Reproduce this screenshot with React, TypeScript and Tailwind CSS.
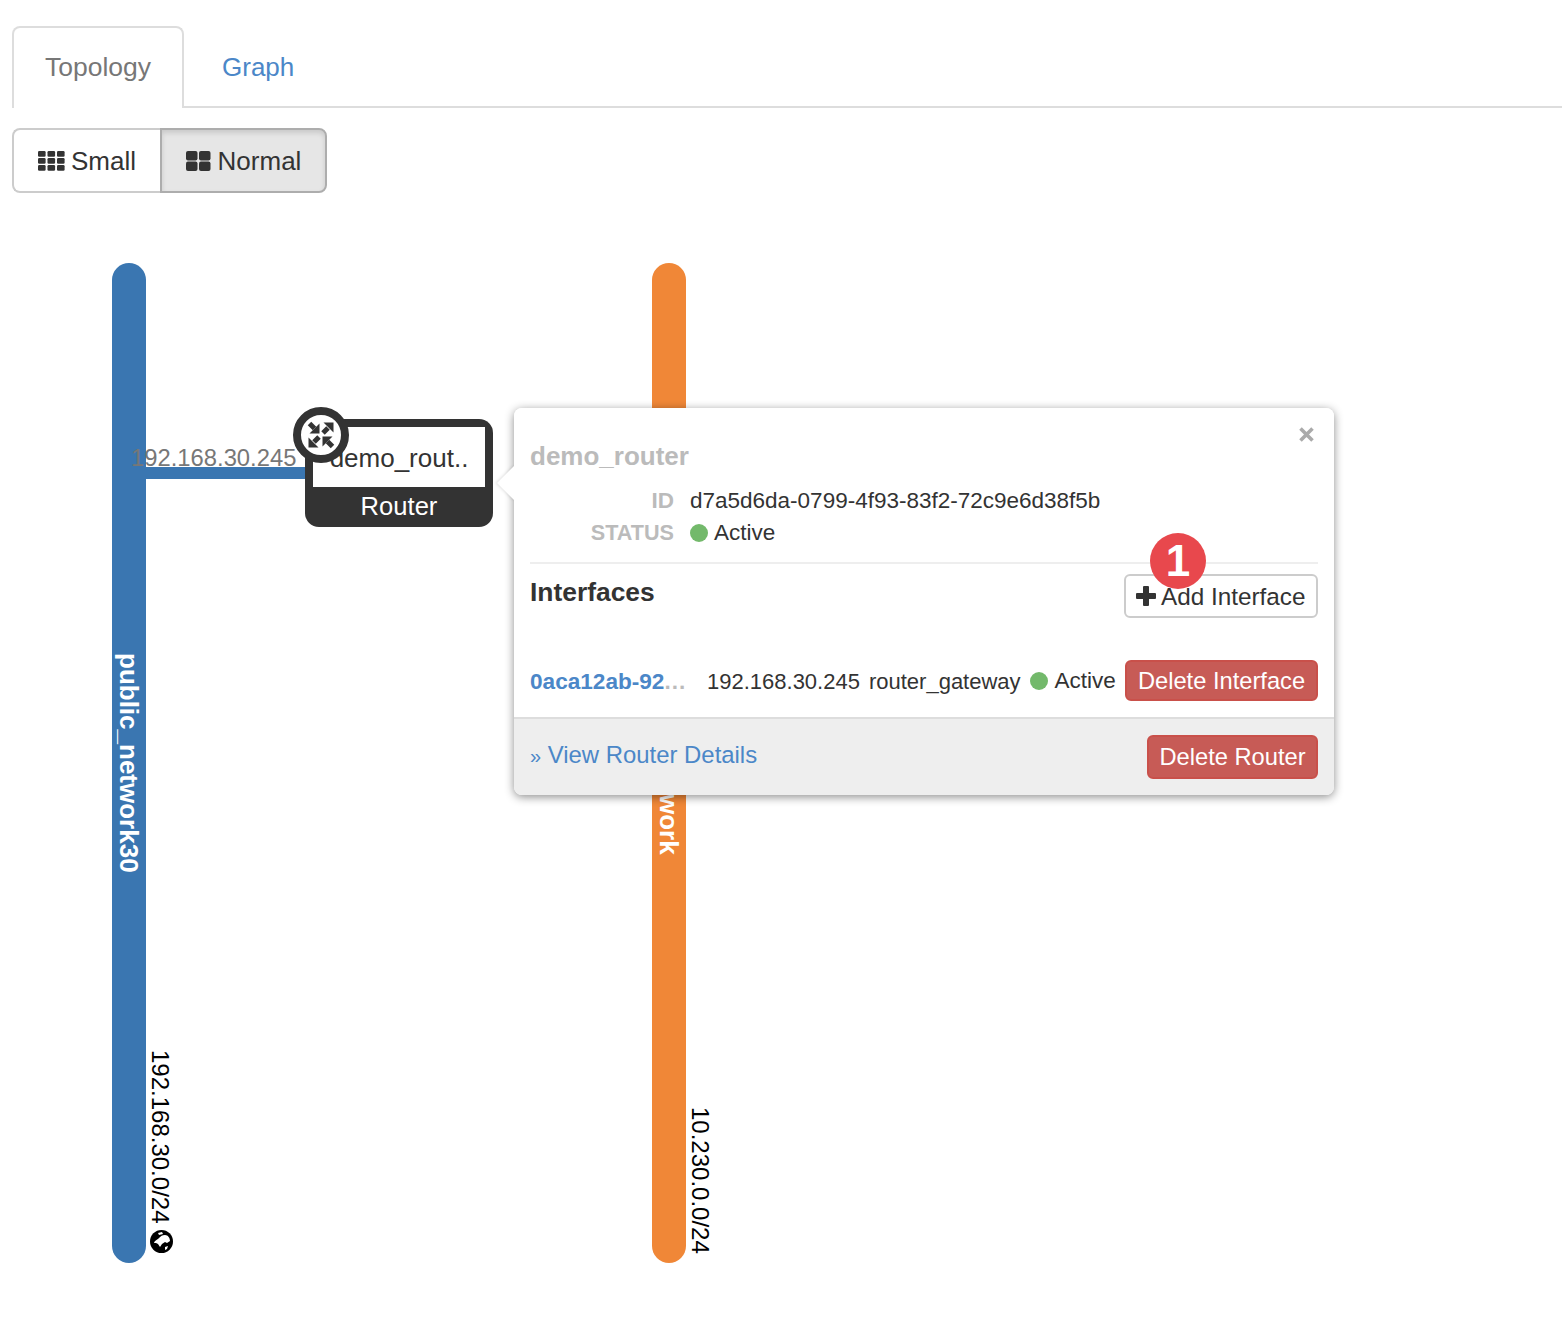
function GridSmall() {
  return (
    <svg width="27" height="20" viewBox="0 0 27 20" fill="#333" className="mb-[2px]">
      {[0, 9.5, 19].map((x) =>
        [0, 7, 14].map((y) => <rect key={`${x}-${y}`} x={x} y={y} width="7.6" height="5.8" rx="1.2" />)
      )}
    </svg>
  )
}

function GridLarge() {
  return (
    <svg width="25" height="20" viewBox="0 0 25 20" fill="#333" className="mb-[2px]">
      {[0, 13].map((x) =>
        [0, 10.5].map((y) => <rect key={`${x}-${y}`} x={x} y={y} width="11.5" height="9.5" rx="2" />)
      )}
    </svg>
  )
}

function RouterIcon() {
  return (
    <svg width="28" height="28" viewBox="0 0 28 28" fill="#333" stroke="#333">
      <path d="M12.5 12.5V2.5L2.5 12.5z" strokeWidth="0" />
      <path d="M7.5 7.5L2.5 2.5" strokeWidth="5" />
      <path d="M26.5 1.5H16.5L26.5 11.5z" strokeWidth="0" />
      <path d="M21 7L16 12" strokeWidth="5" />
      <path d="M1.5 26.5V16.5L11.5 26.5z" strokeWidth="0" />
      <path d="M7 21L12 16" strokeWidth="5" />
      <path d="M15.5 15.5H25.5L15.5 25.5z" strokeWidth="0" />
      <path d="M20.5 20.5L25.5 25.5" strokeWidth="5" />
    </svg>
  )
}

function Globe() {
  return (
    <svg width="23" height="23" viewBox="0 0 23 23">
      <circle cx="11.5" cy="11.5" r="11.5" fill="#000" />
      <path
        d="M4 13c1-3 3-3 5-5s3-3 6-3 5 3 5 6l-3 2-2-1-3 2-2 3-2-3-2-1zM8 3l4-1 1 2-4 1zM15 17l3-1-1 3-2 1z"
        fill="#fff"
      />
    </svg>
  )
}

function PlusIcon() {
  return (
    <svg width="20" height="20" viewBox="0 0 20 20" fill="#333" className="mr-[5px] mb-[2px] shrink-0">
      <rect x="7" y="0" width="6" height="20" rx="1" />
      <rect x="0" y="7" width="20" height="6" rx="1" />
    </svg>
  )
}

function CloseIcon() {
  return (
    <svg width="15" height="15" viewBox="0 0 15 15" stroke="#aaa" strokeWidth="3.6" className="block">
      <path d="M1.5 1.5L13.5 13.5M13.5 1.5L1.5 13.5" />
    </svg>
  )
}

function StatusDot() {
  return <span className="inline-block w-[18px] h-[18px] rounded-full bg-[#73b96b] mr-[6px] shrink-0" />
}

function Popover() {
  return (
    <div className="absolute left-[514px] top-[215px] w-[820px] h-[387px] bg-white rounded-[8px] shadow-[0_2px_10px_rgba(0,0,0,0.45)] flex flex-col">
      <div className="absolute left-[-12px] top-[63px] w-[24px] h-[24px] bg-white rotate-45 shadow-[-1px_1px_3px_rgba(0,0,0,0.12)]" />
      <button className="absolute z-10 right-[20px] top-[19px]">
        <CloseIcon />
      </button>
      <div className="relative flex-1 px-4 pt-[31px] rounded-t-[8px] bg-white">
        <h3 className="text-[26px] leading-[34px] font-bold text-[#bbb]">demo_router</h3>
        <div className="mt-[12px] grid grid-cols-[144px_1fr] gap-x-4 text-[22.5px] leading-[32px] text-[#333]">
          <div className="text-right font-bold text-[#bbb]">ID</div>
          <div>d7a5d6da-0799-4f93-83f2-72c9e6d38f5b</div>
          <div className="text-right font-bold text-[#bbb] text-[21.6px]">STATUS</div>
          <div className="flex items-center"><StatusDot />Active</div>
        </div>
        <div className="mt-[13px] border-t-2 border-[#eee] flex justify-between items-start pt-[10px]">
          <h4 className="text-[26.4px] leading-[36px] font-bold text-[#333]">Interfaces</h4>
          <button className="h-[44px] w-[194px] pl-[10px] pt-[2px] border-2 border-[#ccc] rounded-[6px] flex items-center text-[24.3px] text-[#333] whitespace-nowrap">
            <PlusIcon />
            Add Interface
          </button>
        </div>
        <div className="mt-[42px] flex items-center text-[22px] text-[#333] h-[41px]">
          <span className="w-[156px] pt-[3px] font-bold text-[22.6px] text-[#4b87c8] whitespace-nowrap">
            0aca12ab-92<span className="text-[#bbb] tracking-[1px]">...</span>
          </span>
          <span className="ml-[21px] pt-[1px]">192.168.30.245</span>
          <span className="ml-[9px] pt-[1px]">router_gateway</span>
          <span className="ml-[9px] flex items-center text-[22.5px] gap-[1px]"><StatusDot />Active</span>
          <button className="ml-auto h-[41px] w-[193px] pt-[2px] rounded-[6px] bg-[#c75b56] border-2 border-[#c9504a] text-white text-[23.7px] whitespace-nowrap">
            Delete Interface
          </button>
        </div>
      </div>
      <div className="relative h-[78px] border-t-2 border-[#ddd] bg-[#eee] rounded-b-[8px] px-4 flex items-center justify-between">
        <a className="mb-[4px] text-[23.9px] text-[#4b87c8]"><span className="text-[20px]">»</span> View Router Details</a>
        <button className="h-[44px] w-[171px] pt-[2px] rounded-[6px] bg-[#c75b56] border-2 border-[#c9504a] text-white text-[23.7px] whitespace-nowrap">
          Delete Router
        </button>
      </div>
    </div>
  )
}

function Topology() {
  return (
    <div className="relative h-[1129px] w-full overflow-hidden">
      {/* network bars */}
      <div className="absolute left-[112px] top-[70px] w-[34px] h-[1000px] rounded-full bg-[#3a76b1]" />
      <div className="absolute left-[652px] top-[70px] w-[34px] h-[1000px] rounded-full bg-[#f08737]" />
      <div className="absolute left-[146px] top-[274px] w-[165px] h-[12px] bg-[#3a76b1]" />

      <div className="absolute left-[113px] top-[460px] [writing-mode:vertical-rl] text-[26px] leading-[32px] font-bold text-white whitespace-nowrap">
        public_network30
      </div>
      <div className="absolute left-[653px] top-[601px] [writing-mode:vertical-rl] text-[26px] leading-[32px] font-bold text-white whitespace-nowrap">
        work
      </div>
      <div className="absolute left-[145px] top-[857px] [writing-mode:vertical-rl] text-[24px] leading-[30px] text-black whitespace-nowrap">
        192.168.30.0/24
      </div>
      <div className="absolute left-[150px] top-[1037px]"><Globe /></div>
      <div className="absolute left-[685px] top-[914px] [writing-mode:vertical-rl] text-[24px] leading-[30px] text-black whitespace-nowrap">
        10.230.0.0/24
      </div>

      {/* router node */}
      <div className="absolute left-[305px] top-[226px] w-[188px] h-[108px] bg-[#333] rounded-[14px] px-[8px] pt-[8px]">
        <div className="h-[60px] bg-white text-[26px] leading-[62px] text-[#333] text-center whitespace-nowrap">demo_rout..</div>
        <div className="text-[25.6px] leading-[38px] text-white text-center">Router</div>
      </div>
      <div className="absolute left-[131px] top-[250px] text-[23.8px] leading-[30px] text-[#777] whitespace-nowrap">192.168.30.245</div>
      <div className="absolute left-[293px] top-[214px] w-[56px] h-[56px] rounded-full bg-white border-[8px] border-[#333] flex items-center justify-center">
        <RouterIcon />
      </div>

      <Popover />

      {/* badge */}
      <div className="absolute left-[1150px] top-[340px] w-[56px] h-[56px] rounded-full bg-[#e8484d] text-white text-[44px] font-bold flex items-center justify-center font-['Liberation_Sans',sans-serif]">
        1
      </div>
    </div>
  )
}

export default function App() {
  return (
    <div className="w-[1562px] h-[1322px] bg-white pt-[26px] overflow-hidden font-['Liberation_Sans',Arial,sans-serif]">
      <div className="ml-[12px] flex h-[82px] border-b-2 border-[#ddd]">
        <div className="h-[82px] w-[172px] border-2 border-b-0 border-[#ddd] rounded-t-[8px] bg-white flex items-center justify-center text-[26.5px] text-[#777]">
          Topology
        </div>
        <div className="h-[80px] pt-[2px] px-[38px] flex items-center text-[26px] text-[#4b87c8]">Graph</div>
      </div>
      <div className="pl-[12px] mt-[20px] flex h-[65px]">
        <button className="w-[148px] pt-[2px] border-2 border-[#ccc] border-r-0 rounded-l-[8px] bg-white flex items-center justify-center gap-[6px] text-[26px] text-[#333]">
          <GridSmall />
          Small
        </button>
        <button className="w-[167px] pt-[2px] border-2 border-[#adadad] rounded-r-[8px] bg-[#e6e6e6] shadow-[inset_0_3px_5px_rgba(0,0,0,0.125)] flex items-center justify-center gap-[7px] text-[26px] text-[#333]">
          <GridLarge />
          Normal
        </button>
      </div>
      <Topology />
    </div>
  )
}
